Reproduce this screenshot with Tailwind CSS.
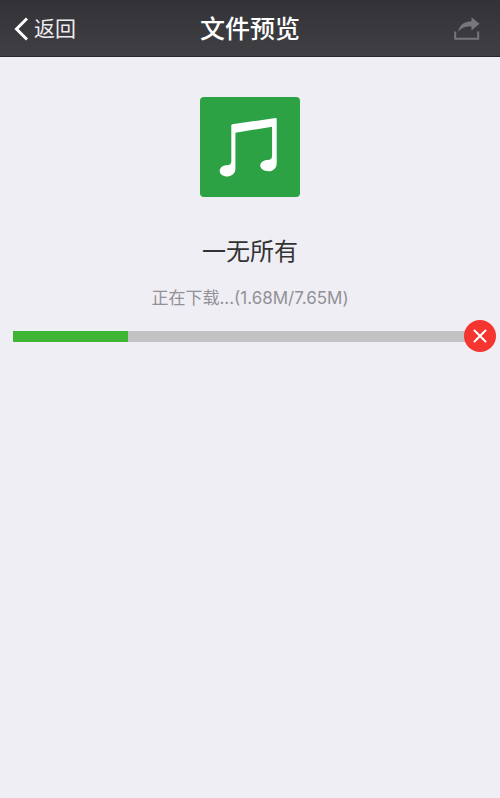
<!DOCTYPE html>
<html lang="zh-CN">
<head>
<meta charset="utf-8">
<meta name="viewport" content="width=device-width, initial-scale=1">
<title>文件预览</title>
<script src="https://cdn.jsdelivr.net/npm/@tailwindcss/browser@4"></script>
</head>
<body class="min-h-screen bg-[#efeef4] font-['Inter','Noto_Sans_CJK_SC',sans-serif]">
<header class="grid h-[57px] grid-cols-[1fr_auto_1fr] items-center border-b border-[#28272b] bg-linear-to-b from-[#333237] to-[#403f44] pt-px text-white">
  <a href="#" class="flex items-center gap-[6px] justify-self-start pl-[14px] text-[21px] leading-[30px] text-[#ececee]">
    <svg class="h-6 w-[14px]" viewBox="0 0 14 24" fill="none" stroke="#fff" stroke-width="3" aria-hidden="true"><path d="M13 1.500 2.500 12 13 22.500"/></svg>
    返回
  </a>
  <h1 class="text-[25px] leading-8 font-medium">文件预览</h1>
  <button type="button" aria-label="分享" class="justify-self-end pr-5">
    <svg class="h-6 w-[26px]" viewBox="0 0 26 24" aria-hidden="true">
      <path d="M1.200 14.500v7.300h23v-7.300" fill="none" stroke="#77767b" stroke-width="2"/>
      <path d="M4 15C5.500 8.500 9.500 4.500 17.500 4.200V.2L25.500 6.800l-8 6.700V9.500C11.500 9.200 7.500 10.500 4 15Z" fill="#77767b"/>
    </svg>
  </button>
</header>
<main class="flex flex-col items-center pt-10">
  <svg class="size-[100px] rounded bg-[#2ca245]" viewBox="0 0 100 100" aria-hidden="true">
    <path d="M31.300 28.500Q31.300 27.500 32.300 27.300L75.700 21Q76.700 20.900 76.700 22V66.500C76.700 71 73.200 74.300 68.500 74.300C63.800 74.300 60.300 71.800 60.300 68.600C60.300 65.400 63.600 63 67.600 63C70.300 63 72.100 61.500 72.100 59V29.700L35.400 35.700V71.500C35.400 76 32 79.400 27.500 79.400C23 79.400 19.700 76.900 19.700 73.900C19.700 70.700 22.900 68.300 26.800 68.300C29.500 68.300 31.300 67 31.300 64.500Z" fill="#fff"/>
  </svg>
  <h2 class="mt-[37px] text-2xl leading-9 text-[#333]">一无所有</h2>
  <p class="mt-4 text-[17px] leading-6 text-[#929196]">正在下载...(1.68M/7.65M)</p>
  <div class="mt-[10px] flex w-full items-center pr-1 pl-[13px]">
    <div role="progressbar" aria-label="下载进度" aria-valuemin="0" aria-valuemax="7.65" aria-valuenow="1.68" class="-mr-1 h-[11px] flex-1 bg-[#c2c2c2]">
      <div class="h-full bg-[#3eb634]" style="width:25.300%"></div>
    </div>
    <button type="button" aria-label="取消下载" class="relative flex size-8 items-center justify-center rounded-full bg-[#f43530]">
      <svg class="size-[14px]" viewBox="0 0 14 14" fill="none" stroke="#fff" stroke-width="2" stroke-linecap="round" aria-hidden="true"><path d="m1.500 1.500 11 11m0-11-11 11"/></svg>
    </button>
  </div>
</main>
</body>
</html>
